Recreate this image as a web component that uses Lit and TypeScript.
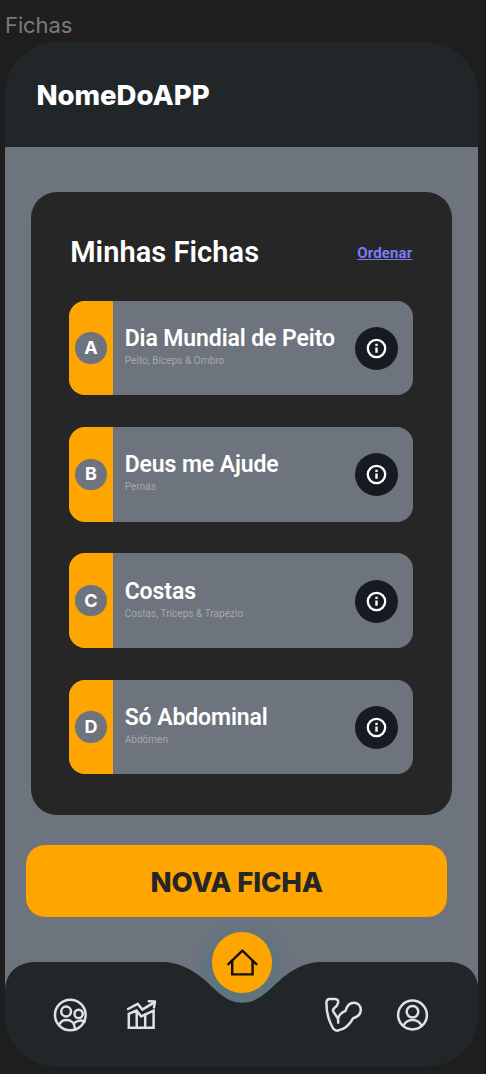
import { LitElement, html, css, svg } from "lit";
import { customElement, property } from "lit/decorators.js";

interface Ficha {
  letter: string;
  title: string;
  muscles: string;
}

const FICHAS: Ficha[] = [
  { letter: "A", title: "Dia Mundial de Peito", muscles: "Peito, Bíceps & Ombro" },
  { letter: "B", title: "Deus me Ajude", muscles: "Pernas" },
  { letter: "C", title: "Costas", muscles: "Costas, Tríceps & Trapézio" },
  { letter: "D", title: "Só Abdominal", muscles: "Abdômen" },
];

@customElement("ficha-item")
class FichaItem extends LitElement {
  @property({ attribute: false }) ficha!: Ficha;

  static styles = css`
    :host {
      display: flex;
      height: 94.6px;
      border-radius: 16px;
      overflow: hidden;
      background: #6d747e;
      font-family: Roboto, sans-serif;
    }
    .tag {
      width: 44.3px;
      flex: none;
      background: #ffa500;
      display: flex;
      align-items: center;
      justify-content: center;
    }
    .letter {
      width: 31.5px;
      height: 31.5px;
      border-radius: 50%;
      background: #6d747e;
      color: #fff;
      display: flex;
      align-items: center;
      justify-content: center;
      font: 700 18px/1 Inter, sans-serif;
      margin-right: 0.6px;
    }
    .text {
      flex: 1;
      padding: 24.4px 0 0 11.2px;
      white-space: nowrap;
    }
    .title {
      color: #fff;
      font-size: 23px;
      font-weight: 600;
      line-height: 28px;
      letter-spacing: -0.1px;
    }
    .muscles {
      color: #a5a7aa;
      font-size: 10px;
      line-height: 12px;
      margin-top: 2px;
      letter-spacing: 0.04px;
    }
    .info {
      flex: none;
      align-self: center;
      width: 43px;
      height: 43px;
      margin-right: 15px;
      margin-top: 1px;
      padding: 0;
      border: 0;
      border-radius: 50%;
      background: #161b22;
    }
    .info svg {
      display: block;
    }
  `;

  render() {
    return html`
      <div class="tag"><span class="letter">${this.ficha.letter}</span></div>
      <div class="text">
        <div class="title">${this.ficha.title}</div>
        <div class="muscles">${this.ficha.muscles}</div>
      </div>
      <button class="info" aria-label="Info">
        <svg width="43" height="43" viewBox="0 0 43 43" fill="none" stroke="#fff">
          <circle cx="21.5" cy="21.5" r="8.7" stroke-width="2.3" />
          <path d="M21.5 20.4v5.4" stroke-width="2.4" />
          <path d="M21.5 16.7v2.3" stroke-width="2.4" />
        </svg>
      </button>
    `;
  }
}

@customElement("nav-bar")
class NavBar extends LitElement {
  static styles = css`
    :host {
      display: block;
      position: relative;
      height: 104.8px;
    }
    .shape {
      display: block;
      position: absolute;
      left: 0;
      top: 0;
    }
    .glow {
      position: absolute;
      left: 187px;
      top: -44px;
      width: 100px;
      height: 100px;
      border-radius: 50%;
      background: radial-gradient(circle closest-side, rgba(90, 116, 124, 0.75) 60%, rgba(90, 116, 124, 0) 100%);
    }
    .home {
      position: absolute;
      left: 206.8px;
      top: -30.2px;
      width: 60.6px;
      height: 60.6px;
      padding: 0;
      border: 0;
      border-radius: 50%;
      background: #ffa500;
    }
    .home svg {
      display: block;
    }
    .icons {
      position: relative;
      display: flex;
      justify-content: space-between;
      padding: 32.5px 45.4px 0 46px;
    }
    .group {
      display: flex;
      gap: 31px;
    }
    .group.right {
      gap: 30px;
    }
  `;

  render() {
    const icon = (body: unknown) => html`
      <svg width="40" height="40" viewBox="0 0 40 40" fill="none" stroke="#dfe1e2" stroke-width="2.5"
        stroke-linejoin="round" stroke-linecap="round">${body}</svg>`;
    return html`
      <div class="glow"></div>
      <svg class="shape" width="473.6" height="105" viewBox="0 0 473.6 105">
        <path fill="#212628" d="M0 30 C0 10 13 0 31 0 H157 C173 0 187 7 201 19 C214 31 222 40.7 237 40.7 C252 40.7 261 31 274 19 C287 7 301 0 317 0 H443 C461 0 473.6 10 473.6 30 V53 C473.6 82 451 104.8 422 104.8 H52 C23 104.8 0 82 0 53 Z" />
      </svg>
      <button class="home" aria-label="Home">
        <svg width="60.6" height="60.6" viewBox="0 0 60.6 60.6" fill="none" stroke="#111" stroke-width="2.4"
          stroke-linejoin="round" stroke-linecap="round">
          <path d="M16.4 32.2 L30.4 18.6 L44.4 32.2" />
          <path d="M20.2 29 V42.4 H40.6 V29" stroke-linejoin="miter" />
        </svg>
      </button>
      <div class="icons">
        <div class="group">
          ${icon(svg`
            <circle cx="19.3" cy="20" r="15.3" />
            <circle cx="15.1" cy="16.5" r="4.9" />
            <circle cx="27.6" cy="18.9" r="4.1" />
            <path d="M8 30 C9.5 26.5 12 25 15.5 25 C20.5 25 24 28.5 24 34.6" />
            <path d="M23.8 27.6 C26.5 25.2 31 25.2 33.8 26.4" />`)}
          ${icon(svg`
            <path d="M6 14 L15.7 8.8 L20.2 14.6 L32 7.6" />
            <path d="M26.8 6.2 L33 6.4 L32 12.4" />
            <path d="M6.8 32.8 V18.8 L14.4 15.6 L19.2 21.4 L31.6 15.6 V32.8 Z" stroke-linejoin="miter" />
            <path d="M14.7 16 V32.4 M23.2 19.6 V32.4" />`)}
        </div>
        <div class="group right">
          ${icon(svg`
            <path d="M3.4 8 C3.4 5.2 4.4 4 7 4 L12 4 C14.8 4.2 15.6 5.6 15 8 C14.4 10.4 13.6 11.6 11.4 13 C9.8 14.2 9.6 15.4 10.6 17 L15 23.6 C15.8 19.8 18 17.6 22.6 15.8 C23.8 11 27 7.7 31 7.7 C35 7.7 37.8 10.8 37.8 14.8 C37.8 19.2 35.4 21.6 30.2 23.2 C27 29 21.6 34.6 14.8 35.6 C11.6 36 10.4 34.4 8.8 31 C5.2 24 3.4 17.6 3.4 8 Z" />
            <path d="M15 22 L15.2 27.6" />`)}
          ${icon(svg`
            <circle cx="19.5" cy="20" r="14.4" />
            <circle cx="19.5" cy="16.8" r="5.8" />
            <path d="M10.4 30.8 C12.4 26.4 15.6 25 19.5 25 C23.4 25 26.6 26.4 28.6 30.8" />`)}
        </div>
      </div>
    `;
  }
}

@customElement("app-root")
class AppRoot extends LitElement {
  static styles = css`
    :host {
      display: block;
      box-sizing: border-box;
      height: 1074px;
      overflow: hidden;
      padding-left: 5px;
      background: #1e1e1e;
      font-family: Roboto, sans-serif;
    }
    .frame-name {
      height: 41.5px;
      box-sizing: border-box;
      padding-top: 11px;
      color: #7a7a7a;
      font: 400 22px/28px Inter, sans-serif;
      letter-spacing: -0.1px;
    }
    .phone {
      width: 473.4px;
      height: 1025.5px;
      display: flex;
      flex-direction: column;
      background: linear-gradient(#6d747e, #6d747e) 0 104px / 100% 864px no-repeat;
    }
    .header {
      flex: none;
      height: 105.2px;
      box-sizing: border-box;
      padding: 36.4px 0 0 31.4px;
      border-radius: 52px 52px 0 0;
      background: #212628;
      color: #fff;
      font: 800 27.6px/34px Inter, sans-serif;
      letter-spacing: -0.05px;
    }
    .card {
      flex: none;
      box-sizing: border-box;
      width: 420.8px;
      height: 622.6px;
      margin: 45.3px 0 0 26.2px;
      padding: 0 39.2px 0 38px;
      border-radius: 26px;
      background: #262626;
    }
    .card-head {
      display: flex;
      align-items: center;
      justify-content: space-between;
      height: 108.8px;
      box-sizing: border-box;
      padding: 10.6px 0 0 1px;
    }
    .heading {
      margin: 0;
      color: #fff;
      font-size: 29px;
      font-weight: 600;
      line-height: 34px;
      letter-spacing: 0.05px;
    }
    .sort {
      color: #7b7cf5;
      font-size: 15px;
      font-weight: 700;
      text-decoration: underline;
      margin: 2.8px 0.4px 0 0;
      letter-spacing: 0.14px;
    }
    .list {
      display: flex;
      flex-direction: column;
      gap: 31.7px;
    }
    .new {
      flex: none;
      width: 421px;
      height: 72.2px;
      margin: 30.4px 0 0 21.2px;
      padding: 2px 0 0;
      border: 0;
      border-radius: 19px;
      background: #ffa500;
      color: #262626;
      font: 800 27.6px/34px Inter, sans-serif;
      letter-spacing: -0.15px;
    }
    .nav {
      margin-top: auto;
      flex: none;
    }
  `;

  render() {
    return html`
      <div class="frame-name">Fichas</div>
      <div class="phone">
        <header class="header">NomeDoAPP</header>
        <section class="card">
          <div class="card-head">
            <h1 class="heading">Minhas Fichas</h1>
            <a class="sort">Ordenar</a>
          </div>
          <div class="list">
            ${FICHAS.map((f) => html`<ficha-item .ficha=${f}></ficha-item>`)}
          </div>
        </section>
        <button class="new">NOVA FICHA</button>
        <nav-bar class="nav"></nav-bar>
      </div>
    `;
  }
}
